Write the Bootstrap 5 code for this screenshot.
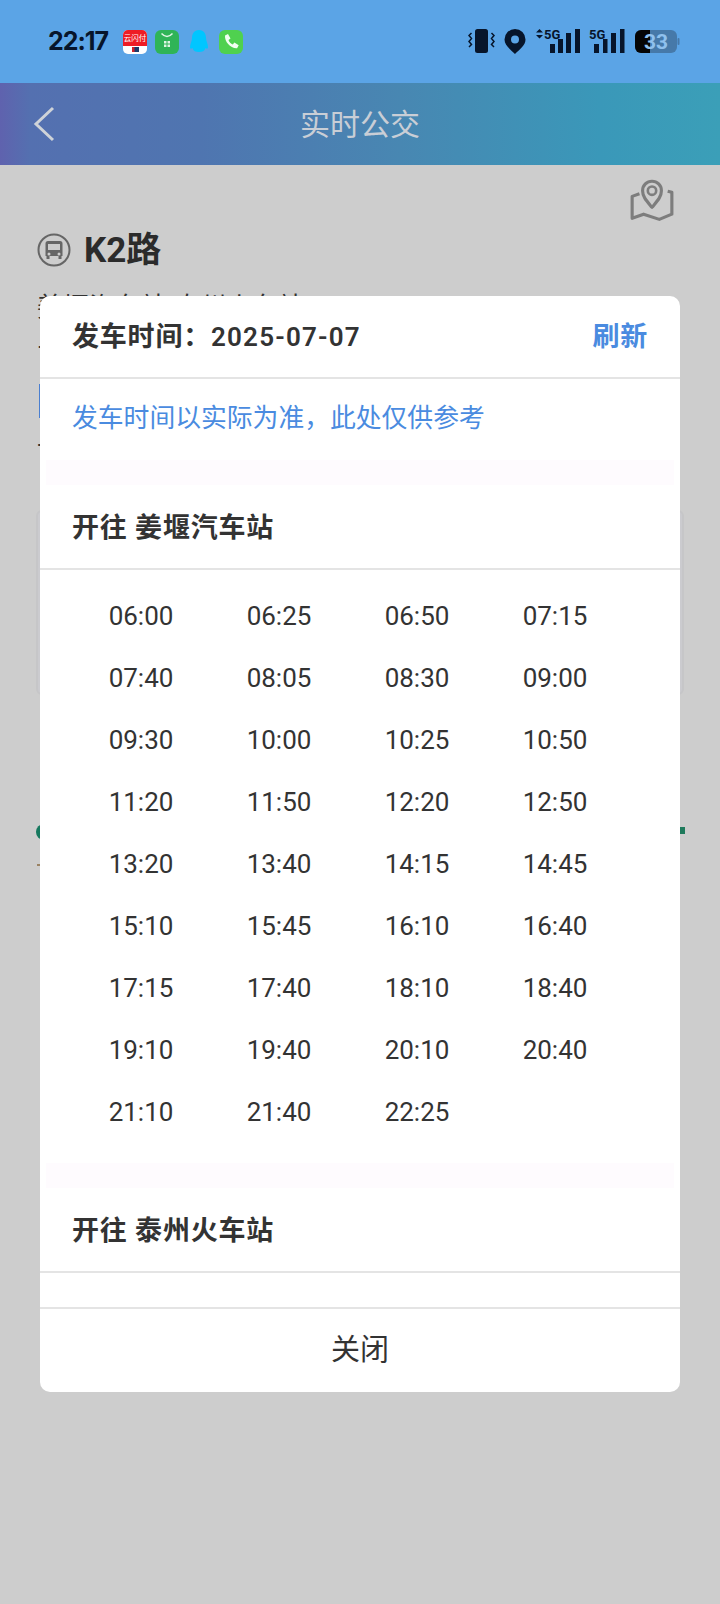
<!DOCTYPE html>
<html lang="zh-CN">
<head>
  <meta charset="UTF-8">
  <meta name="viewport" content="width=device-width, initial-scale=1.0">
  <title>实时公交</title>
  <link rel="stylesheet" href="https://cdn.jsdelivr.net/npm/bootstrap@5.3.0/dist/css/bootstrap.min.css">
  <style>
    body {
      width: 720px;
      height: 1604px;
      overflow: hidden;
      position: relative;
      background: #cdcdcd;
      font-family: Roboto, "Noto Sans CJK SC", sans-serif;
      color: #333;
    }
    .status-bar {
      height: 83px;
      background: #5ba4e6;
      padding: 29px 40px 0 48px;
    }
    .clock {
      font-size: 25px;
      line-height: 25px;
      font-weight: 700;
      width: 75px;
      color: #07152b;
      font-family: Inter, Roboto, sans-serif;
      letter-spacing: -1px;
    }
    .status-right {
      margin-top: -4px;
    }
    .app-bar {
      height: 82px;
      background: linear-gradient(90deg, #5f62ae 0, #5470b0 30px, #4f75b0 200px, #4887b2 400px, #3a98b9 600px, #3b9fb8 720px);
      color: #c9ced6;
      font-size: 30px;
    }
    .back-btn {
      left: 32px;
      top: 23px;
    }
    .under-page {
      padding: 11px 36px 0 37px;
      height: 700px;
    }
    .map-btn {
      margin-right: 9px;
      height: 46px;
    }
    .route-head {
      margin-top: 10px;
      height: 36px;
    }
    .route-name {
      font-size: 35px;
      line-height: 38px;
      height: 36px;
      margin-left: 5px;
      font-weight: 700;
      color: #2b2b2b;
    }
    .under-text {
      font-size: 26px;
      line-height: 30px;
      color: #333;
      white-space: nowrap;
    }
    .under-tick {
      margin-top: 10px;
    }
    .under-blue {
      width: 4px;
      height: 34px;
      margin-top: 22px;
      background: #4a7fd0;
      margin-left: 2px;
    }
    .under-card {
      height: 185px;
      margin: 46px 0 0 -1px;
      border: 2px solid #c6c6c8;
      border-radius: 6px;
      background: #cbcbcf;
    }
    .under-dot {
      left: 36px;
      top: 824px;
      width: 16px;
      height: 16px;
      background: #17795f;
    }
    .under-mark {
      left: 680px;
      top: 827px;
      width: 5px;
      height: 7px;
      background: #1f7a5c;
    }
    .under-dash {
      left: 37px;
      top: 864px;
      width: 8px;
      height: 2px;
      background: #9a8263;
    }
    .time-modal {
      position: absolute;
      left: 40px;
      top: 296px;
      width: 640px;
      height: 1096px;
      border: 0;
      border-radius: 10px;
      overflow: hidden;
      background: #fff;
    }
    .time-head {
      height: 83px;
      padding: 2px 32px 0;
      border-bottom: 2px solid #e4e4e4;
      border-radius: 0;
      font-size: 27px;
      font-weight: 700;
      letter-spacing: .8px;
    }
    .time-date {
      font-size: 26px;
      font-weight: 600;
      letter-spacing: 1.2px;
    }
    .refresh {
      color: #4a8be0;
    }
    .notice {
      height: 81px;
      padding: 0 32px 3px;
      font-size: 25.8px;
      color: #4a8be0;
      display: flex;
      align-items: center;
    }
    .band {
      height: 25px;
      margin: 0 6px;
      background: #fefbfe;
    }
    .dir-title {
      height: 85px;
      padding: 3px 32px 0;
      border-bottom: 2px solid #e4e4e4;
      font-size: 27px;
      font-weight: 700;
      letter-spacing: .8px;
      display: flex;
      align-items: center;
    }
    .time-grid {
      width: 552px;
      margin-left: 32px;
      padding-top: 15px;
      height: 593px;
    }
    .time-cell {
      height: 62px;
      line-height: 62px;
      font-size: 26px;
      text-align: center;
      color: #333;
    }
    .scroll-part {
      height: 1011px;
      overflow: hidden;
    }
    .close-bar {
      height: 85px;
      padding: 0;
      border-top: 2px solid #e4e4e4;
      border-radius: 0;
      font-size: 29px;
      justify-content: center;
      color: #333;
    }
  </style>
</head>
<body>

<div class="status-bar d-flex align-items-start">
  <div class="clock">22:17</div>
  <svg width="124" height="26" viewBox="0 0 124 26" class="flex-shrink-0">
    <!-- pay app -->
    <rect x="0" y="1" width="24" height="24" rx="5" fill="#fff"/>
    <path d="M0 17V6a5 5 0 0 1 5-5h14a5 5 0 0 1 5 5v11z" fill="#ee1c25"/>
    <text x="12" y="12" font-size="7.5" fill="#fff" text-anchor="middle" font-family="Noto Sans CJK SC">云闪付</text>
    <rect x="9" y="18" width="7" height="5" fill="#1a3a6b"/>
    <rect x="9" y="18" width="2.5" height="5" fill="#d0202a"/>
    <!-- shop app -->
    <rect x="32" y="1" width="24" height="24" rx="6" fill="#2fb457"/>
    <path d="M38.500 4.500q5.500 6 11 0" fill="none" stroke="#dff5e4" stroke-width="1.500"/>
    <path d="M41 12h2.500v2.500h-2.500zM44.500 12h2.500v2.500h-2.500zM41 15.500h2.500v2.500h-2.500zM44.500 15.500h2.500v2.500h-2.500z" fill="#dff5e4"/>
    <!-- qq -->
    <path d="M76 1c-5 0-7 4-7 8 0 3-2 6-2 9 0 2 1 2 2.500 1 1 3 3 4 6.500 4s5.500-1 6.500-4c1.500 1 2.500 1 2.500-1 0-3-2-6-2-9 0-4-2-8-7-8z" fill="#00c6ff"/>
    <!-- phone app -->
    <rect x="96" y="1" width="24" height="24" rx="6" fill="#4fd14f"/>
    <path d="M102 6.500l3-1.500 2.500 4.500-2 1.500c.7 2 2.300 3.600 4.300 4.500l1.600-1.900 4.300 2.600-1.600 3c-6.500.5-12.700-6.500-12.100-12.700z" fill="#f2fff2"/>
  </svg>
  <svg width="212" height="30" viewBox="0 -4 212 30" class="status-right ms-auto flex-shrink-0">
    <!-- vibrate -->
    <rect x="7" y="0" width="13" height="24" rx="2.500" fill="#07152b"/>
    <path d="M3.500 4l-2.500 2.500 2.500 3-2.500 3 2.500 3-2.500 2.500M23.500 4l2.500 2.500-2.500 3 2.500 3-2.500 3 2.500 2.500" fill="none" stroke="#07152b" stroke-width="1.500"/>
    <!-- location -->
    <path fill-rule="evenodd" d="M47 0a10.500 10.500 0 0 1 10.500 10.500c0 6-6 10-10.500 14.500-4.500-4.500-10.500-8.500-10.500-14.500A10.500 10.500 0 0 1 47 0zm0 6.500a4 4 0 1 0 0 8 4 4 0 0 0 0-8z" fill="#07152b"/>
    <!-- signal one -->
    <path d="M68 3.500l3.500-3.500 3.500 3.500zM68 6l3.500 3.500 3.500-3.500z" fill="#07152b"/>
    <text x="76" y="10" font-size="13" font-weight="700" fill="#07152b" font-family="Roboto">5G</text>
    <path d="M82 15h5v9h-5zM90 10h5v14h-5zM98 4h5v20h-5zM107 0h5v24h-5z" fill="#07152b"/>
    <!-- signal two -->
    <text x="121" y="10" font-size="13" font-weight="700" fill="#07152b" font-family="Roboto">5G</text>
    <path d="M126 15h5v9h-5zM135 10h4.500v14h-4.500zM143 4h5v20h-5zM152 0h4.500v24h-4.500z" fill="#07152b"/>
    <!-- battery -->
    <rect x="167" y="1" width="42" height="23" rx="6" fill="#4679a9"/>
    <path d="M173 1h9v23h-9a6 6 0 0 1-6-6V7a6 6 0 0 1 6-6z" fill="#050505"/>
    <rect x="209.500" y="9" width="2" height="7" rx="1" fill="#4679a9"/>
    <text x="188" y="20" font-size="21" font-weight="700" fill="#8fc1ee" text-anchor="middle" font-family="Roboto">33</text>
  </svg>
</div>

<div class="app-bar position-relative d-flex align-items-center justify-content-center">
  <svg class="back-btn position-absolute" width="24" height="36" viewBox="0 0 24 36">
    <path d="M21 2L4 18l17 16" fill="none" stroke="#cfd3d8" stroke-width="3"/>
  </svg>
  实时公交
</div>

<div class="under-page position-relative">
  <div class="d-flex justify-content-end">
    <svg class="map-btn" width="46" height="46" viewBox="0 0 44 44">
      <path d="M10 17l-7 2.500v21l11-4 15 5 12-5v-21l-4-1" fill="none" stroke="#7d7d7d" stroke-width="3" stroke-linejoin="round"/>
      <path d="M22 31c-5-6-9-10-9-16a9 9 0 0 1 18 0c0 6-4 10-9 16z" fill="#cdcdcd" stroke="#7d7d7d" stroke-width="3" stroke-linejoin="round" transform="translate(0 -1)"/>
      <circle cx="22" cy="14" r="4" fill="none" stroke="#7d7d7d" stroke-width="2.500"/>
    </svg>
  </div>
  <div class="route-head d-flex align-items-center gap-2">
    <svg width="34" height="34" viewBox="0 0 34 34" class="flex-shrink-0">
      <circle cx="17" cy="17" r="15.500" fill="none" stroke="#666" stroke-width="2"/>
      <path fill-rule="evenodd" d="M11 8h12a2.500 2.500 0 0 1 2.500 2.500V23h-1v3h-3v-3h-9v3h-3v-3h-1V10.500A2.500 2.500 0 0 1 11 8zm0 3v6h12v-6zm1 8.500a1.500 1.500 0 1 0 0 3 1.500 1.500 0 0 0 0-3zm10 0a1.500 1.500 0 1 0 0 3 1.500 1.500 0 0 0 0-3z" fill="#666"/>
    </svg>
    <div class="route-name">K2路</div>
  </div>
  <div class="under-text mt-4">姜堰汽车站-泰州火车站</div>
  <div class="under-text under-tick">—</div>
  <div class="under-blue"></div>
  <div class="under-text mt-3">计划发车</div>
  <div class="under-card"></div>
</div>

<div class="under-dot position-absolute rounded-circle"></div>
<div class="under-mark position-absolute"></div>
<div class="under-dash position-absolute"></div>

<div class="modal-content time-modal">
  <div class="scroll-part">
    <div class="modal-header time-head d-flex justify-content-between align-items-center">
      <span>发车时间：<span class="time-date">2025-07-07</span></span>
      <span class="refresh">刷新</span>
    </div>
    <div class="notice">发车时间以实际为准，此处仅供参考</div>
    <div class="band"></div>

    <div class="dir-title">开往 姜堰汽车站</div>
    <div class="time-grid row row-cols-4 g-0 align-content-start" id="timeGrid"></div>
    <div class="band"></div>

    <div class="dir-title">开往 泰州火车站</div>
  </div>
  <div class="modal-footer close-bar">关闭</div>
</div>

<script>
  const times = ["06:00","06:25","06:50","07:15","07:40","08:05","08:30","09:00","09:30","10:00","10:25","10:50",
    "11:20","11:50","12:20","12:50","13:20","13:40","14:15","14:45","15:10","15:45","16:10","16:40",
    "17:15","17:40","18:10","18:40","19:10","19:40","20:10","20:40","21:10","21:40","22:25"];
  document.getElementById("timeGrid").innerHTML = times.map(t => `<div class="col time-cell">${t}</div>`).join("");
</script>
<script src="https://cdn.jsdelivr.net/npm/bootstrap@5.3.0/dist/js/bootstrap.bundle.min.js"></script>
</body>
</html>
